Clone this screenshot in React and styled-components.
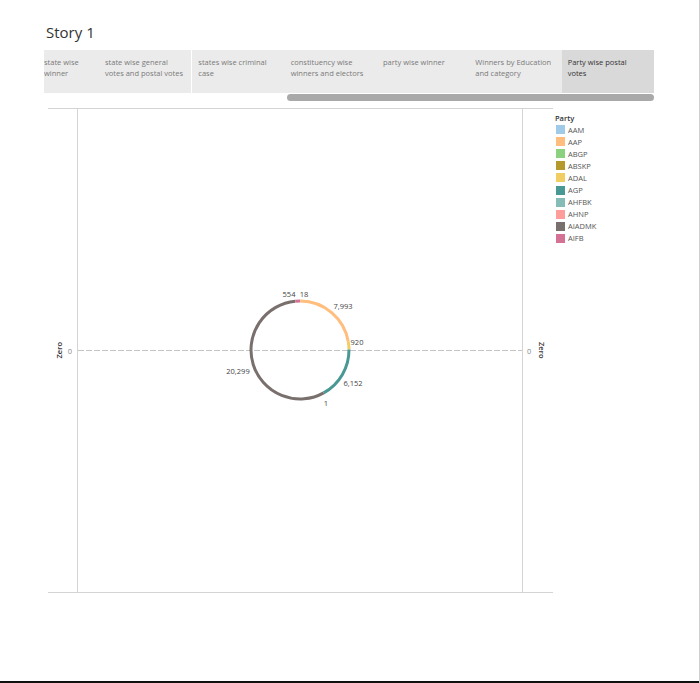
import React from 'react'
import styled, { createGlobalStyle } from 'styled-components'

const GlobalStyle = createGlobalStyle`
  body {
    margin: 0;
    background: #ffffff;
    font-family: "Open Sans", "Liberation Sans", sans-serif;
  }
`

const tabs = [
  { lines: ['state wise', 'winner'], first: true },
  { lines: ['state wise general', 'votes and postal votes'] },
  { lines: ['states wise criminal', 'case'], divider: true },
  { lines: ['constituency wise', 'winners and electors'] },
  { lines: ['party wise winner'] },
  { lines: ['Winners by Education', 'and category'] },
  { lines: ['Party wise postal', 'votes'], active: true }
]

const parties = [
  { name: 'AAM', color: '#a0cbe8' },
  { name: 'AAP', color: '#ffbe7d' },
  { name: 'ABGP', color: '#8cd17d' },
  { name: 'ABSKP', color: '#b6992d' },
  { name: 'ADAL', color: '#f1ce63' },
  { name: 'AGP', color: '#499894' },
  { name: 'AHFBK', color: '#86bcb6' },
  { name: 'AHNP', color: '#ff9d9a' },
  { name: 'AIADMK', color: '#79706e' },
  { name: 'AIFB', color: '#d37295' }
]

// postal votes, clockwise from the top of the ring
const slices = [
  { value: 18, color: '#a0cbe8', label: '18', x: 304, y: 294 },
  { value: 7993, color: '#ffbe7d', label: '7,993', x: 343, y: 306 },
  { value: 920, color: '#f1ce63', label: '920', x: 357, y: 342 },
  { value: 6152, color: '#499894', label: '6,152', x: 353, y: 383 },
  { value: 1, color: '#ff9d9a', label: '1', x: 326, y: 403 },
  { value: 20299, color: '#79706e', label: '20,299', x: 238, y: 371 },
  { value: 554, color: '#d37295', label: '554', x: 289, y: 294 }
]

const Page = styled.div`
  position: relative;
  box-sizing: border-box;
  width: 700px;
  height: 683px;
  border-right: 1px solid #cfcfcf;
  display: flex;
  flex-direction: column;
`

const Title = styled.h1`
  box-sizing: border-box;
  height: 50px;
  margin: 0;
  padding: 22px 0 0 46px;
  font-size: 15px;
  line-height: 20px;
  font-weight: 400;
  color: #333333;
`

const Navigator = styled.div`
  margin-left: 44px;
  width: 610px;
`

const TabStrip = styled.div`
  display: flex;
  height: 43px;
  background: #ebebeb;
  overflow: hidden;
`

const Tab = styled.div`
  box-sizing: border-box;
  flex: ${p => (p.$first ? '0 0 55px' : '1 1 0')};
  padding: 7px 4px 0 ${p => (p.$first ? '0' : '6px')};
  border-left: ${p => (p.$divider ? '1px solid #ffffff' : 'none')};
  background: ${p => (p.$active ? '#d9d9d9' : 'transparent')};
  color: ${p => (p.$active ? '#333333' : '#7a7a7a')};
  font-size: 7.5px;
  line-height: 10.5px;
  white-space: nowrap;
`

const ScrollTrack = styled.div`
  margin-top: 1px;
  height: 7px;
`

const ScrollThumb = styled.div`
  margin-left: 243px;
  width: 367px;
  height: 7px;
  border-radius: 3.5px;
  background: #a9a9a9;
`

const Content = styled.div`
  display: flex;
  align-items: flex-start;
  margin-top: 7px;
`

const ChartFrame = styled.div`
  box-sizing: border-box;
  display: flex;
  margin-left: 48px;
  width: 505px;
  height: 485px;
  border-top: 1px solid #d4d4d4;
  border-bottom: 1px solid #d4d4d4;
`

const Axis = styled.div`
  box-sizing: border-box;
  display: flex;
  align-items: center;
  flex-direction: ${p => (p.$side === 'left' ? 'row' : 'row')};
  justify-content: ${p => (p.$side === 'left' ? 'flex-end' : 'flex-start')};
  width: ${p => (p.$side === 'left' ? '29px' : '30px')};
  padding: ${p => (p.$side === 'left' ? '0 5px 0 0' : '0 0 0 4px')};
  gap: ${p => (p.$side === 'left' ? '6px' : '8px')};
`

const AxisTitle = styled.span`
  writing-mode: vertical-rl;
  transform: ${p => (p.$side === 'left' ? 'rotate(180deg)' : 'none')};
  font-size: 7.5px;
  font-weight: 600;
  line-height: 6px;
  color: #333333;
`

const Tick = styled.span`
  font-size: 7.5px;
  line-height: 10px;
  color: #888888;
`

const Plot = styled.div`
  box-sizing: border-box;
  width: 446px;
  height: 100%;
  border-left: 1px solid #d4d4d4;
  border-right: 1px solid #d4d4d4;
`

const Legend = styled.div`
  margin-left: 2px;
  padding-top: 4.5px;
`

const LegendTitle = styled.div`
  font-size: 7.5px;
  line-height: 10px;
  font-weight: 600;
  color: #333333;
  margin-bottom: 1px;
`

const LegendRow = styled.div`
  display: flex;
  align-items: center;
  gap: 3px;
  height: 12.1px;
  padding-left: 1px;
`

const Swatch = styled.span`
  width: 9px;
  height: 9px;
  background: ${p => p.$color};
`

const LegendText = styled.span`
  font-size: 7.5px;
  line-height: 10px;
  color: #555555;
`

const BottomBar = styled.div`
  margin-top: auto;
  height: 2px;
  background: #111111;
`

const point = (cx, cy, r, deg) => {
  const a = (deg * Math.PI) / 180
  return [cx + r * Math.sin(a), cy - r * Math.cos(a)]
}

const Ring = () => {
  const cx = 300
  const cy = 350
  const r = 49
  const total = slices.reduce((s, d) => s + d.value, 0)
  let start = 0
  return (
    <svg width="444" height="483" viewBox="78 109 444 483" style={{ display: 'block' }}>
      <line x1="78" y1="350.5" x2="522" y2="350.5" stroke="#c4c4c4" strokeWidth="1" strokeDasharray="6 2" />
      {slices.map((d, i) => {
        const sweep = (d.value / total) * 360
        const end = start + sweep
        const [x1, y1] = point(cx, cy, r, start)
        const [x2, y2] = point(cx, cy, r, end)
        const large = sweep > 180 ? 1 : 0
        start = end
        return (
          <path
            key={i}
            d={`M ${x1} ${y1} A ${r} ${r} 0 ${large} 1 ${x2} ${y2}`}
            fill="none"
            stroke={d.color}
            strokeWidth="3"
          />
        )
      })}
      {slices.map((d, i) => (
        <text
          key={'t' + i}
          x={d.x}
          y={d.y + 2.6}
          textAnchor="middle"
          fontSize="7.5"
          fill="#444444"
          fontFamily='"Open Sans", sans-serif'
        >
          {d.label}
        </text>
      ))}
    </svg>
  )
}

const App = () => (
  <Page>
    <GlobalStyle />
    <Title>Story 1</Title>
    <Navigator>
      <TabStrip>
        {tabs.map((t, i) => (
          <Tab key={i} $first={t.first} $divider={t.divider} $active={t.active}>
            {t.lines.map((l, j) => (
              <div key={j}>{l}</div>
            ))}
          </Tab>
        ))}
      </TabStrip>
      <ScrollTrack>
        <ScrollThumb />
      </ScrollTrack>
    </Navigator>
    <Content>
      <ChartFrame>
        <Axis $side="left">
          <AxisTitle $side="left">Zero</AxisTitle>
          <Tick>0</Tick>
        </Axis>
        <Plot>
          <Ring />
        </Plot>
        <Axis $side="right">
          <Tick>0</Tick>
          <AxisTitle $side="right">Zero</AxisTitle>
        </Axis>
      </ChartFrame>
      <Legend>
        <LegendTitle>Party</LegendTitle>
        {parties.map(p => (
          <LegendRow key={p.name}>
            <Swatch $color={p.color} />
            <LegendText>{p.name}</LegendText>
          </LegendRow>
        ))}
      </Legend>
    </Content>
    <BottomBar />
  </Page>
)

export default App
